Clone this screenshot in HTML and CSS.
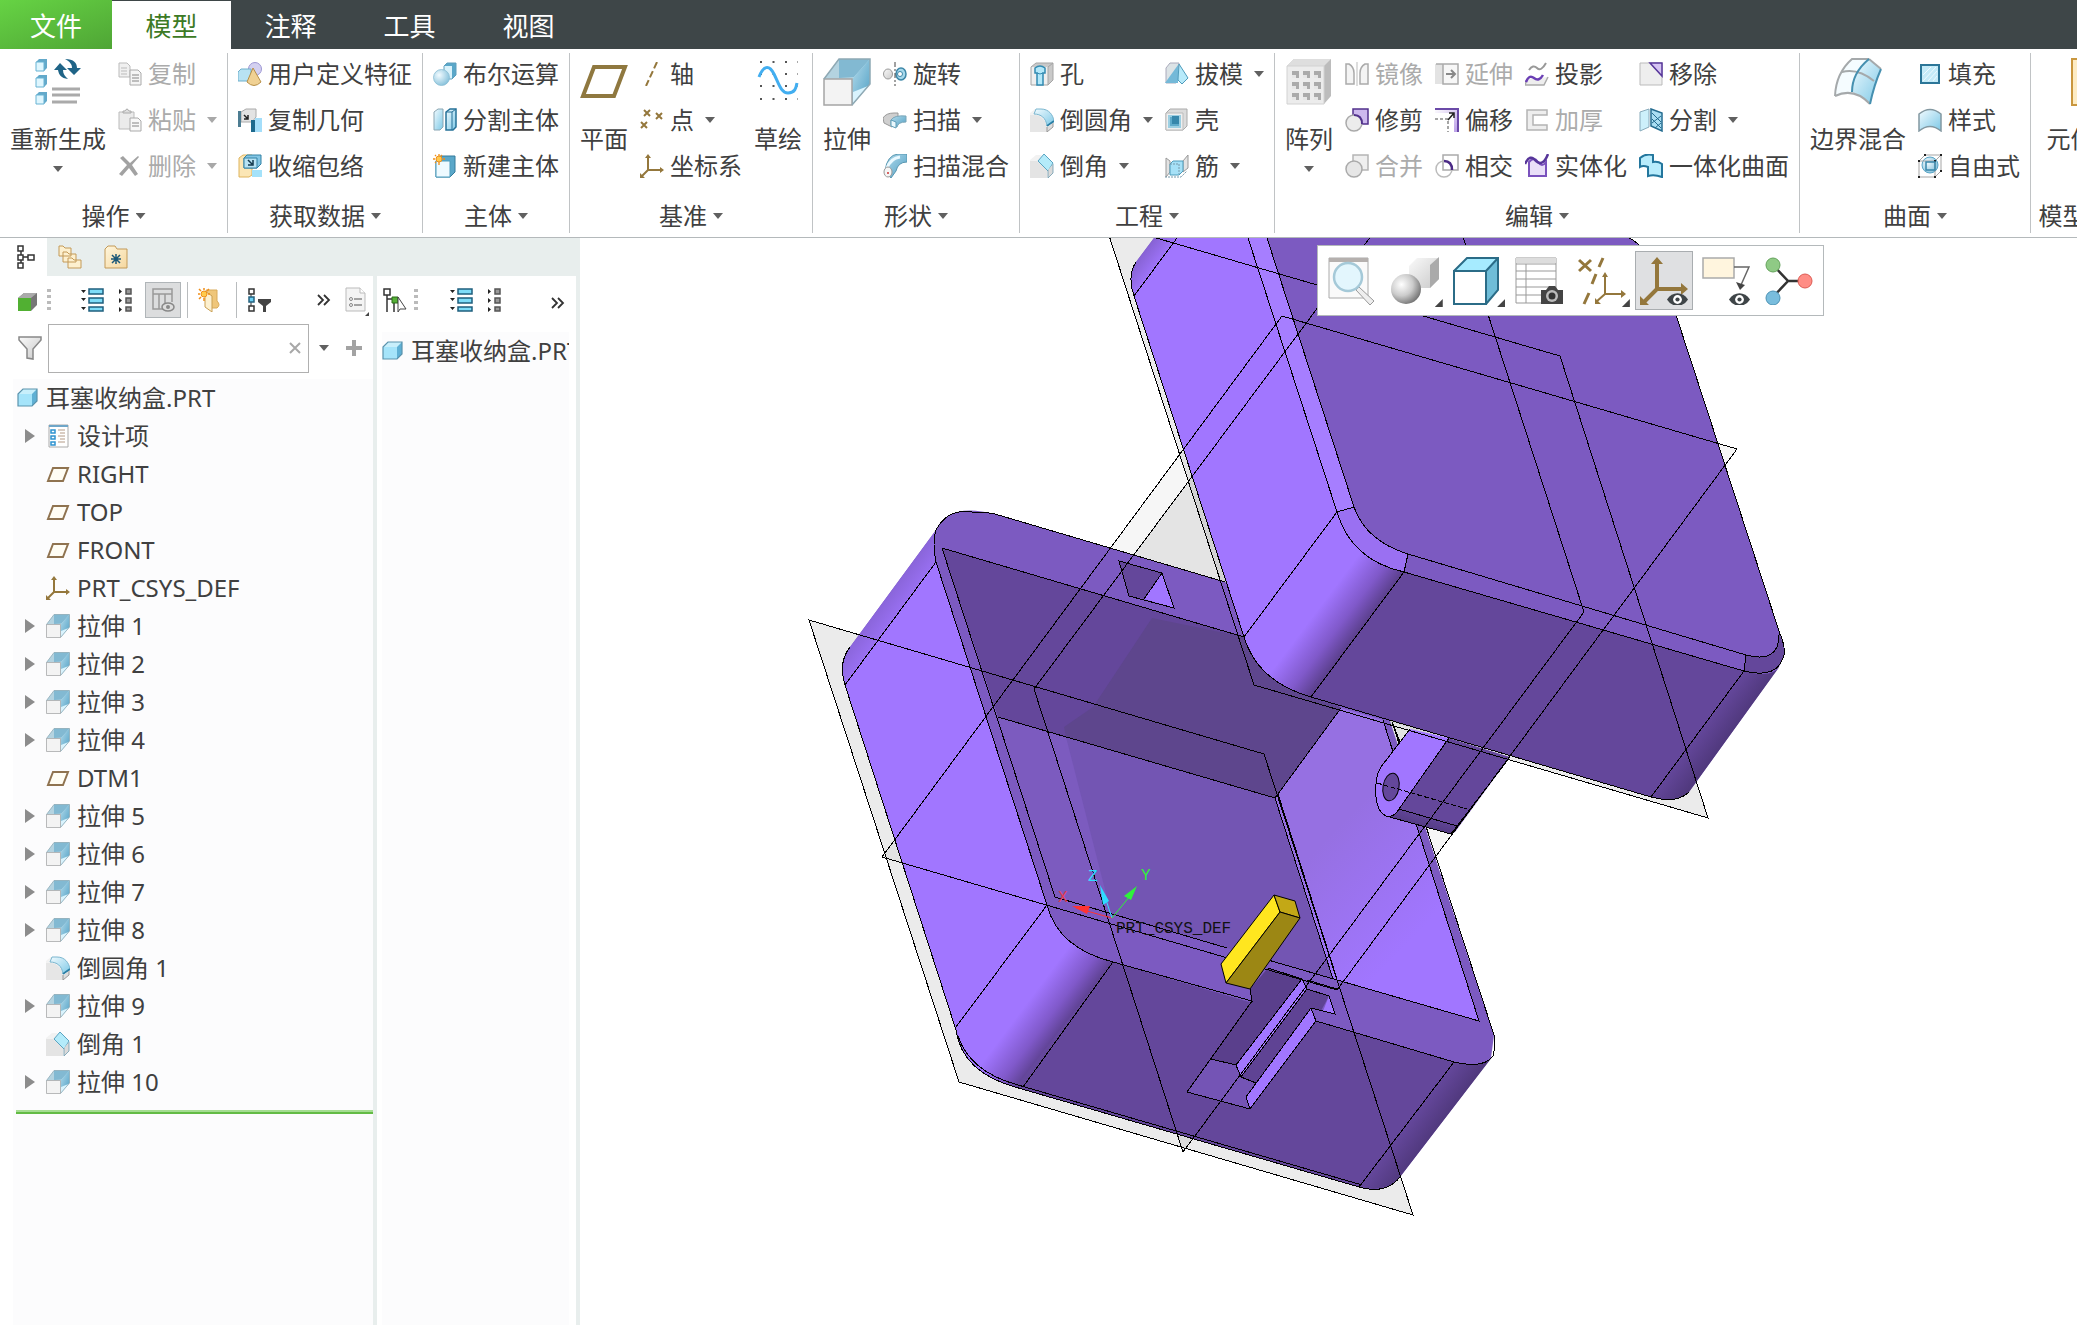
FILE: index.html
```html
<!DOCTYPE html>
<html lang="zh-CN">
<head>
<meta charset="utf-8">
<title>耳塞收纳盒.PRT</title>
<link rel="stylesheet" href="styles.css">
</head>
<body>
<svg class="sprite" width="0" height="0" aria-hidden="true">
  <defs>
    <linearGradient id="blue" x1="0" y1="0" x2="1" y2="1"><stop offset="0" stop-color="#f2fbff"/><stop offset="1" stop-color="#7cc8e6"/></linearGradient>
    <linearGradient id="blueDeep" x1="0" y1="0" x2="1" y2="1"><stop offset="0" stop-color="#b5dcec"/><stop offset="1" stop-color="#4f9fc4"/></linearGradient>
    <linearGradient id="gray" x1="0" y1="0" x2="1" y2="1"><stop offset="0" stop-color="#fafafa"/><stop offset="1" stop-color="#c9c9c9"/></linearGradient>
    <linearGradient id="lilac" x1="0" y1="0" x2="1" y2="1"><stop offset="0" stop-color="#fff"/><stop offset="1" stop-color="#b79be6"/></linearGradient>
    <linearGradient id="tan" x1="0" y1="0" x2="1" y2="1"><stop offset="0" stop-color="#fff6dc"/><stop offset="1" stop-color="#f5d79f"/></linearGradient>
    <radialGradient id="ball" cx=".35" cy=".35" r=".75"><stop offset="0" stop-color="#fff"/><stop offset=".5" stop-color="#ccc"/><stop offset="1" stop-color="#666"/></radialGradient>
    <radialGradient id="blueBall" cx=".35" cy=".35" r=".75"><stop offset="0" stop-color="#f2fbff"/><stop offset="1" stop-color="#7fbdd8"/></radialGradient>
  </defs>
  <symbol id="i-extrude" viewBox="0 0 48 48">
    <path d="M1 21 16 1h31v25L29 47H1z" fill="#d4e9f2"/>
    <path d="M16 1h31L29 21H1z" fill="#b4d3e0"/>
    <path d="M16 1h31L31 19 16 20z" fill="#82b9d2"/>
    <path d="M47 1v25L29 47V21z" fill="url(#blueDeep)"/>
    <path d="M45 28 30 46V34z" fill="#d9f3fd"/>
    <path d="M1 21h28v26H1z" fill="#f3f3f3" stroke="#a5a5a5" stroke-width="1.500"/>
    <path d="M1 21 16 1h31v25L29 47" fill="none" stroke="#8fa9b4" stroke-width="1.500"/>
  </symbol>
  <symbol id="i-round" viewBox="0 0 24 24">
    <path d="M0 5 5 1h6v23H0z" fill="#f2f2f2"/>
    <path d="M0 7h4c8 0 12 6 13 12v5H0z" fill="#e6e6e6"/>
    <path d="M6 1h5c8 0 12 6 13 12l-7 5C16 10 11 6 4 6z" fill="url(#blue)" stroke="#7bb6cf"/>
    <path d="M17 18l7-5" stroke="#2c7fa5" stroke-width="2"/><path d="M23 15v4l-6 5v-5" fill="#ddd" stroke="#999"/>
  </symbol>
  <symbol id="i-chamfer" viewBox="0 0 24 24">
    <path d="M0 6 6 1h5l12 12v6l-7 5H0z" fill="#f2f2f2"/><path d="M0 7h7l10 9v8H0z" fill="#e4e4e4"/>
    <path d="M14 0 23 9l-5 8L8 7z" fill="#b4ebfa" stroke="#5aa4c2"/><path d="M18 16v8l5-5V10" fill="#dadada" stroke="#6e9cb0" stroke-width=".8"/>
  </symbol>
  <symbol id="i-plane" viewBox="0 0 24 24"><path d="M7 6h15l-5 13H2z" fill="#fffdf4" stroke="#8f7350" stroke-width="2"/></symbol>
  <symbol id="i-csys" viewBox="0 0 24 24"><path d="M8 2v14h14M8 16l-7 7" fill="none" stroke="#94773c" stroke-width="2"/><path d="M5 4l3-4 3 4zM20 13l4 3-4 3zM0 19v5h5z" fill="#94773c"/></symbol>
  <symbol id="i-part" viewBox="0 0 24 24"><path d="M1 8 6 3h14v12l-5 5H1z" fill="#5fb0d4"/><path d="M1 8 6 3h14l-5 5z" fill="#c8effb"/><path d="M1 8h14v12H1z" fill="#a5e4fa"/><path d="M1 8 6 3h14v12l-5 5H1z" fill="none" stroke="#5a93ad" stroke-width="1.200"/></symbol>
  <symbol id="i-expand" viewBox="0 0 24 24"><path d="M1 2h5L3.500 5zM1 10h5l-2.500 3zM1 19h5l-2.500 3z" fill="#222"/><path d="M9 1h14v5H9zM9 10h14v5H9zM9 19h14v4H9z" fill="#7edcf8" stroke="#1f5f7d" stroke-width="1.500"/></symbol>
  <symbol id="i-collapse" viewBox="0 0 14 24"><path d="M0 1v5l3-2.500zM0 10v5l3-2.500zM0 19v5l3-2.500z" fill="#222"/><path d="M7 1h5v5H7zM7 10h5v5H7zM7 19h5v4H7z" fill="#999" stroke="#555" stroke-width="1.500"/></symbol>
  <symbol id="i-eye" viewBox="0 0 20 12"><path d="M0 6C5-2 15-2 20 6 15 14 5 14 0 6z" fill="#3f4548"/><circle cx="10" cy="6" r="4.200" fill="#fff"/><circle cx="10" cy="6" r="2" fill="#3f4548"/></symbol>
  <symbol id="i-design" viewBox="0 0 24 24"><path d="M3 1h19v22H3z" fill="#fff" stroke="#aaa"/><path d="M3 1h19v2H3z" fill="#6fa6c8"/><path d="M5 6h4v3H5zM5 12h4v3H5zM5 18h4v3H5z" fill="#fff" stroke="#2f93cf" stroke-width="1.500"/><path d="M12 6h7M14 9h5M12 12h7M14 15h5M12 18h7" stroke="#b39a86" stroke-width="1"/></symbol>
</svg>

<nav class="tabs" aria-label="功能区">
  <button class="tab tab-file">文件</button>
  <button class="tab tab-active">模型</button>
  <button class="tab">注释</button>
  <button class="tab">工具</button>
  <button class="tab">视图</button>
</nav>

<header class="ribbon">
  <section class="group">
    <div class="commands">
      <button class="big"><svg viewBox="0 0 48 48"><path d="M2 4l3-3h8v9l-3 3H2zM2 20l3-3h8v9l-3 3H2zM2 37l3-3h8v9l-3 3H2z" fill="#63a9ca"/><path d="M2 4h8v9H2zM2 20h8v9H2zM2 37h8v9H2z" fill="#dff6fe" stroke="#69b3d3"/><path d="M18 31h28M18 37h28M18 44h25" stroke="#aaa" stroke-width="3"/><path d="M31 1c9 0 12 4 12 9h4l-7 7-7-7h5c0-4-2-6-7-9z" fill="#1f6487"/><path d="M34 21c-7-1-9-4-10-9h-4l6-7 7 7h-4c0 4 2 6 5 9z" fill="#1f6487"/></svg><span>重新生成</span><i class="caret"></i></button>
      <div class="column">
        <button class="cmd" disabled><svg viewBox="0 0 24 24"><path d="M1 1h8l3 3v11H1z" fill="#f0f0f0" stroke="#bbb"/><path d="M3 6h6M3 9h6M3 12h6" stroke="#bbb"/><path d="M12 8h8l3 3v12H12z" fill="#f5f5f5" stroke="#aaa"/><path d="M14 13h7M14 16h7M14 19h7" stroke="#aaa" stroke-width="1.500"/></svg><span>复制</span></button>
        <button class="cmd" disabled><svg viewBox="0 0 24 24"><path d="M1 4h15v17H1z" fill="#ebebeb" stroke="#bbb"/><path d="M5 5V3h2q2-4 4 0h2v2z" fill="#ddd" stroke="#aaa"/><path d="M12 10h8l3 3v10H12z" fill="#f8f8f8" stroke="#aaa"/><path d="M14 15h7M14 18h7" stroke="#aaa" stroke-width="1.500"/></svg><span>粘贴</span><i class="caret"></i></button>
        <button class="cmd" disabled><svg viewBox="0 0 24 24"><path d="M2 4 5 2l7 7 8-7 1 1-7 8 6 9-3 2-6-8-7 8-3-2 8-9z" fill="#a2a2a2"/></svg><span>删除</span><i class="caret"></i></button>
      </div>
    </div>
    <button class="label">操作<i class="caret"></i></button>
  </section>

  <section class="group">
    <div class="commands">
      <div class="column">
        <button class="cmd"><svg viewBox="0 0 24 24"><circle cx="17" cy="7" r="6.500" fill="#d3d0f0" stroke="#9d97d3"/><path d="M0 10l3-3h10v9l-3 3H0z" fill="#b8e2f3" stroke="#6fb0cc"/><path d="M15 6l8 14q-7 7-14 0z" fill="#f0d193" stroke="#b78f47"/></svg><span>用户定义特征</span></button>
        <button class="cmd"><svg viewBox="0 0 24 24"><path d="M3 4l5-3h10v8l-4 5H3z" fill="#e3e3e3" stroke="#aaa"/><path d="M6 7l4 4m0-4v4H6" stroke="#222" stroke-width="1.500" fill="none"/><path d="M0 3h3v16H0z" fill="#4d7d92"/><path d="M13 12h4v12h-4z" fill="#1d6a8e"/><path d="M17 10h7v14h-7z" fill="#a4defa"/></svg><span>复制几何</span></button>
        <button class="cmd"><svg viewBox="0 0 24 24"><path d="M1 4l4-3h9v20l-3 2H1z" fill="#fbe6b5" stroke="#dfb45d"/><path d="M6 4l3-3h14v9l-4 4H6z" fill="#84c6e4" stroke="#3282a6"/><path d="M6 4h13v10H6z" fill="#b7e2f3" stroke="#3282a6"/><path d="M10 6l4 4m1-4v5h-5" stroke="#13384c" stroke-width="1.500" fill="none"/><path d="M14 16h10v7H14z" fill="#a4e2fa"/></svg><span>收缩包络</span></button>
      </div>
    </div>
    <button class="label">获取数据<i class="caret"></i></button>
  </section>

  <section class="group">
    <div class="commands">
      <div class="column">
        <button class="cmd"><svg viewBox="0 0 24 24"><path d="M11 4l3-3h9v12l-4 4h-8z" fill="#5aa7c9"/><path d="M11 4h8v13h-8z" fill="#d9f2fb"/><path d="M11 4l3-3h9v12l-4 4h-8z" fill="none" stroke="#5e9fbd"/><circle cx="8.500" cy="15.500" r="8" fill="url(#blueBall)" stroke="#89bdd3" stroke-width=".8"/></svg><span>布尔运算</span></button>
        <button class="cmd"><svg viewBox="0 0 24 24"><path d="M1 4l4-3h5v18l-3 3H1z" fill="url(#blue)" stroke="#8aa6b3"/><path d="M13 4l4-3h6v18l-3 3h-7z" fill="url(#blue)" stroke="#267198" stroke-width="1.500"/><path d="M13 4h6v18M19 4l4-3" fill="none" stroke="#267198"/></svg><span>分割主体</span></button>
        <button class="cmd"><svg viewBox="0 0 24 24"><path d="M3 7l4-5h15v16l-5 5H3z" fill="#5aa7c9" stroke="#347a9b"/><path d="M3 7h14v16H3z" fill="#eefaff" stroke="#4d9dbe"/><circle cx="6" cy="5" r="3" fill="#ffc94d" stroke="#ef8e1a"/><path d="M6 0v2M6 8v3M0 5h2M10 5h2M2 1l1 1M9 1l-1 1M2 9l1-1" stroke="#ef8e1a" stroke-width="1.300"/></svg><span>新建主体</span></button>
      </div>
    </div>
    <button class="label">主体<i class="caret"></i></button>
  </section>

  <section class="group">
    <div class="commands">
      <button class="big"><svg viewBox="0 0 48 48"><path d="M14 9h31L34 38H3z" fill="#fff" stroke="#8f783f" stroke-width="4"/></svg><span>平面</span></button>
      <div class="column">
        <button class="cmd"><svg viewBox="0 0 24 24"><path d="M17 0 6 24" stroke="#94773c" stroke-width="2" stroke-dasharray="7 3"/></svg><span>轴</span></button>
        <button class="cmd"><svg viewBox="0 0 24 24"><path d="M4 2l6 6m0-6L4 8M16 5l6 6m0-6l-6 6M1 14l6 6m0-6l-6 6" stroke="#94773c" stroke-width="2"/></svg><span>点</span><i class="caret"></i></button>
        <button class="cmd"><svg><use href="#i-csys"/></svg><span>坐标系</span></button>
      </div>
      <button class="big"><svg viewBox="0 0 48 48"><path d="M6 4h38M6 16h38M6 28h38M6 41h38" stroke="#555" stroke-width="2" stroke-dasharray="2 10.500"/><path d="M5 19C9 8 15 6 20 16s7 19 14 19 8-5 9-10" fill="none" stroke="#42aef0" stroke-width="3"/></svg><span>草绘</span></button>
    </div>
    <button class="label">基准<i class="caret"></i></button>
  </section>

  <section class="group">
    <div class="commands">
      <button class="big"><svg><use href="#i-extrude"/></svg><span>拉伸</span></button>
      <div class="column">
        <button class="cmd"><svg viewBox="0 0 24 24"><ellipse cx="5" cy="12" rx="4.500" ry="5" fill="url(#gray)" stroke="#999"/><ellipse cx="18" cy="12" rx="5" ry="6" fill="#a5d8ec" stroke="#3d87a8" stroke-width="1.500"/><circle cx="17" cy="12" r="2.500" fill="#fff" stroke="#3d87a8"/><path d="M12 0v24" stroke="#444" stroke-dasharray="5 2 2 2"/></svg><span>旋转</span></button>
        <button class="cmd"><svg viewBox="0 0 24 24"><path d="M0 10q3-5 11-5h4v6q-6 0-6 4v4L1 15z" fill="#cfcfcf" stroke="#999"/><path d="M8 12q3-5 15-4v6q-8 0-9 5l-6-2z" fill="url(#blueDeep)" stroke="#7aa6b8"/><path d="M8 12l5 2v6l-5-2z" fill="#eaf8fd" stroke="#5e9db8"/></svg><span>扫描</span><i class="caret"></i></button>
        <button class="cmd"><svg viewBox="0 0 24 24"><path d="M2 17Q4 1 15 0h9v8q-9 0-11 9l-5 7z" fill="url(#blueDeep)" stroke="#5997b1"/><path d="M4 14Q8 4 17 3" stroke="#eaf9ff" stroke-width="3" fill="none"/><ellipse cx="5" cy="18" rx="4" ry="5" fill="#f5f5f5" stroke="#999"/><circle cx="5" cy="19" r="1" fill="#c33"/></svg><span>扫描混合</span></button>
      </div>
    </div>
    <button class="label">形状<i class="caret"></i></button>
  </section>

  <section class="group">
    <div class="commands">
      <div class="column">
        <button class="cmd"><svg viewBox="0 0 24 24"><path d="M1 5l5-4h17v17l-5 5H1z" fill="#c9c9c9"/><path d="M1 5h17v18H1z" fill="#efefef"/><path d="M1 5l5-4h17v17l-5 5H1zM18 23V5l5-4" fill="none" stroke="#a5a5a5"/><path d="M5 6q5-4 10 0v5h-2v12H7V11H5z" fill="#b4e8f9" stroke="#328bb2" stroke-width="1.500"/><path d="M7 11q3 2 6 0" stroke="#328bb2" fill="none"/></svg><span>孔</span></button>
        <button class="cmd"><svg><use href="#i-round"/></svg><span>倒圆角</span><i class="caret"></i></button>
        <button class="cmd"><svg><use href="#i-chamfer"/></svg><span>倒角</span><i class="caret"></i></button>
      </div>
      <div class="column">
        <button class="cmd"><svg viewBox="0 0 24 24"><path d="M1 6l4-5h9l-3 20H1z" fill="#dce3e6" stroke="#aab"/><path d="M0 21 13 3v18z" fill="#74b9d8"/><path d="M14 2 23 16l-6 6-4-4z" fill="#b7eafa" stroke="#4e9bbb"/></svg><span>拔模</span><i class="caret"></i></button>
        <button class="cmd"><svg viewBox="0 0 24 24"><path d="M1 5l4-4h17v17l-4 4H1z" fill="#dcdcdc" stroke="#aaa"/><path d="M1 5h17v17H1z" fill="#efefef" stroke="#bbb"/><path d="M4 8h11v11H4z" fill="#5fabcb" stroke="#9ccfe2" stroke-width="2"/><path d="M7 8h7v8H7z" fill="#3787ab"/></svg><span>壳</span></button>
        <button class="cmd"><svg viewBox="0 0 24 24"><path d="M1 4l4 3v11l-4 5zM23 1l-5 6v11l5-4z" fill="#e3e3e3" stroke="#999"/><path d="M5 10l3-3h10v10l-4 4H5z" fill="#a6e1f7" stroke="#4d9cbb"/><path d="M5 10h9v10M0 23h16l6-6" fill="none" stroke="#79a" stroke-dasharray="2 1"/></svg><span>筋</span><i class="caret"></i></button>
      </div>
    </div>
    <button class="label">工程<i class="caret"></i></button>
  </section>

  <section class="group">
    <div class="commands">
      <button class="big"><svg viewBox="0 0 48 48"><path d="M2 8 9 1h37v37l-7 8H2z" fill="#bcbcbc"/><path d="M2 8 9 1h37l-7 7z" fill="#dedede"/><path d="M2 8h37v38H2z" fill="#ececec" stroke="#d2d2d2"/><path d="M7 13h7v7H7zM18 13h7v7h-7zM29 13h7v7h-7zM7 24h7v7H7zM18 24h7v7h-7zM29 24h7v7h-7zM7 35h7v7H7zM18 35h7v7h-7zM29 35h7v7h-7z" fill="#aaa"/><path d="M7 20v-3h4v3zM18 20v-3h4v3zM29 20v-3h4v3zM7 31v-3h4v3zM18 31v-3h4v3zM29 31v-3h4v3zM7 42v-3h4v3zM18 42v-3h4v3zM29 42v-3h4v3z" fill="#e6e6e6"/></svg><span>阵列</span><i class="caret"></i></button>
      <div class="column">
        <button class="cmd" disabled><svg viewBox="0 0 24 24"><path d="M1 2h3q5 3 5 9v11H1zM23 2h-3q-5 3-5 9v11h8z" fill="#f4f4f4" stroke="#aaa" stroke-width="1.500"/><path d="M12 0v24" stroke="#bbb"/></svg><span>镜像</span></button>
        <button class="cmd"><svg viewBox="0 0 24 24"><path d="M8 1h15v15H8z" fill="#cdb9ee" stroke="#51318c" stroke-width="1.500"/><circle cx="9" cy="15" r="8" fill="#ececec" stroke="#aaa" stroke-width="1.500"/><path d="M9 7q8 0 8 9" fill="none" stroke="#51318c" stroke-width="2"/></svg><span>修剪</span></button>
        <button class="cmd" disabled><svg viewBox="0 0 24 24"><path d="M8 1h15v15H8z" fill="#efefef" stroke="#b5b5b5" stroke-width="1.500"/><circle cx="9" cy="15" r="8" fill="#e6e6e6" stroke="#aaa" stroke-width="1.500"/></svg><span>合并</span></button>
      </div>
      <div class="column">
        <button class="cmd" disabled><svg viewBox="0 0 24 24"><path d="M0 2h10v20H0z" fill="#e3e3e3"/><path d="M1 2h22v20H8V2" fill="#f7f7f7" stroke="#aaa" stroke-width="1.500"/><path d="M11 12h9m-4-4 4 4-4 4" stroke="#888" stroke-width="2" fill="none"/></svg><span>延伸</span></button>
        <button class="cmd"><svg viewBox="0 0 24 24"><path d="M0 0h24v24h-5V5H0z" fill="url(#lilac)"/><path d="M0 1h23v23" fill="none" stroke="#6b4aa8" stroke-width="2"/><path d="M0 11h13v13" fill="none" stroke="#888" stroke-width="1.500" stroke-dasharray="3 2"/><path d="M13 12l6-7m-5 0h5v5" fill="none" stroke="#222" stroke-width="1.500"/></svg><span>偏移</span></button>
        <button class="cmd"><svg viewBox="0 0 24 24"><path d="M8 1h15v15H8z" fill="#fff" stroke="#aaa" stroke-width="1.500"/><circle cx="9" cy="15" r="8" fill="none" stroke="#bbb" stroke-width="1.500"/><path d="M9 7q8 0 8 9" fill="none" stroke="#4b2a86" stroke-width="2.500"/></svg><span>相交</span></button>
      </div>
      <div class="column">
        <button class="cmd"><svg viewBox="0 0 24 24"><path d="M4 8q4-6 8-2t9-5" fill="none" stroke="#999" stroke-width="2"/><path d="M2 17 0 23h19l4-8" fill="#eee" stroke="#aaa" stroke-width="1.500"/><path d="M1 20q3-8 8-4t9-3" fill="none" stroke="#6b3fb5" stroke-width="2.500"/></svg><span>投影</span></button>
        <button class="cmd" disabled><svg viewBox="0 0 24 24"><path d="M2 2h20v5H8v10h14v5H2z" fill="#eee" stroke="#b4b4b4" stroke-width="1.500"/></svg><span>加厚</span></button>
        <button class="cmd"><svg viewBox="0 0 24 24"><path d="M4 8q5-6 9 0t8 0v14H4z" fill="#e9dff8" stroke="#7a52bd" stroke-width="2"/><path d="M0 10Q5-1 11 7q7 6 12-7" fill="none" stroke="#57369a" stroke-width="2.500"/></svg><span>实体化</span></button>
      </div>
      <div class="column">
        <button class="cmd"><svg viewBox="0 0 24 24"><path d="M1 1h22v22H1z" fill="#eee" stroke="#bbb"/><path d="M11 1h12v13z" fill="#d6c4f3" stroke="#57369a" stroke-width="1.500"/></svg><span>移除</span></button>
        <button class="cmd"><svg viewBox="0 0 24 24"><path d="M1 4l9-3v18l-9 4z" fill="#cdf0fb" stroke="#8ab"/><path d="M12 1l11 4v18l-11-5z" fill="#a9def3" stroke="#246c90" stroke-width="1.500"/><path d="M13 5l9 9M13 11l9 9M22 8l-9 7M22 15l-6 5" stroke="#246c90"/></svg><span>分割</span><i class="caret"></i></button>
        <button class="cmd"><svg viewBox="0 0 24 24"><path d="M1 4q6-5 13-3v7q5-1 9 2v13q-8-3-14-1v-9q-5-2-8 0z" fill="#b8ecfc" stroke="#23769d" stroke-width="2"/></svg><span>一体化曲面</span></button>
      </div>
    </div>
    <button class="label">编辑<i class="caret"></i></button>
  </section>

  <section class="group">
    <div class="commands">
      <button class="big"><svg viewBox="0 0 48 48"><path d="M1 38Q2 15 18 1h17L47 11Q40 27 36 46 20 29 1 38z" fill="#f5fcff"/><path d="M35 1l12 10Q40 27 36 46q-9-9-18-12 0-20 17-33z" fill="url(#blue)"/><path d="M1 38Q2 15 18 1h17M1 38q19-9 35 8M8 14q16-4 32 9" fill="none" stroke="#a5a9ab" stroke-width="2"/><path d="M35 1l12 10" stroke="#a5a9ab" stroke-width="2"/><path d="M35 1Q18 15 18 34M47 11Q40 27 36 46" fill="none" stroke="#4690b0" stroke-width="2"/></svg><span>边界混合</span></button>
      <div class="column">
        <button class="cmd"><svg viewBox="0 0 24 24"><path d="M3 3h18v18H3z" fill="#c5ebf8" stroke="#2c7698" stroke-width="2"/><path d="M5 13l8-8M5 19 18 5M10 19l9-10M15 19l4-5" stroke="#eefaff"/></svg><span>填充</span></button>
        <button class="cmd"><svg viewBox="0 0 24 24"><path d="M1 6q11-9 22 0v17q-11-9-22 0z" fill="url(#blue)" stroke="#8398a1" stroke-width="1.500"/></svg><span>样式</span></button>
        <button class="cmd"><svg viewBox="0 0 24 24"><circle cx="12" cy="11" r="8" fill="url(#blueBall)" stroke="#5aa5c6"/><path d="M1 7h16v16H1zM7 1h16v16l-6 6M1 7l6-6M17 7l6-6" fill="none" stroke="#a5a5a5"/><path d="M0 6h2v2H0zM16 6h2v2h-2zM0 22h2v2H0zM16 22h2v2h-2zM6 0h2v2H6zM22 0h2v2h-2zM22 16h2v2h-2z" fill="#222"/><path d="M8 8h9v8H8z" fill="none" stroke="#3787ab" stroke-width="1.500"/></svg><span>自由式</span></button>
      </div>
    </div>
    <button class="label">曲面<i class="caret"></i></button>
  </section>

  <section class="group group-intent">
    <div class="commands">
      <button class="big"><svg viewBox="0 0 48 48"><path d="M1 1h46v46H1z" fill="#fdecc4" stroke="#c9973f" stroke-width="2"/></svg><span>元件界面</span></button>
    </div>
    <button class="label">模型意图<i class="caret"></i></button>
  </section>
</header>

<main class="workspace">
  <aside class="navigator">
    <div class="nav-tabs">
      <button class="nav-tab nav-tab-active" aria-label="模型树"><svg viewBox="0 0 24 24"><path d="M7 6v12M8 12h8" stroke="#333" stroke-width="1.500" fill="none"/><path d="M4 1h5v5H4zM4 10h5v5H4zM14 10h6v5h-6zM4 18h5v5H4z" fill="#fff" stroke="#333" stroke-width="1.500"/></svg></button>
      <button class="nav-tab" aria-label="文件夹浏览器"><svg viewBox="0 0 24 24"><path d="M1 1h4l2 2h6v8H1zM5 7h4l2 2h7v8H5zM10 13h4l2 2h7v8H10z" fill="#fdf0cf" stroke="#c39a58"/></svg></button>
      <button class="nav-tab" aria-label="收藏夹"><svg viewBox="0 0 24 24"><path d="M1 4l3-3h7l2 3h10v19H1z" fill="url(#tan)" stroke="#c39a58"/><path d="M12 9v10M7 14h10M8 10l8 8M16 10l-8 8" stroke="#1b5878" stroke-width="1.500"/></svg></button>
    </div>
    <div class="panes">
      <section class="pane pane-tree">
        <div class="toolbar">
          <button class="tool" aria-label="模型"><svg viewBox="0 0 24 24"><path d="M2 10 8 5h13v12l-6 6H2z" fill="#777"/><path d="M2 10 8 5h13l-6 5z" fill="#aaa"/><path d="M2 10h13v13H2z" fill="#51b032"/></svg></button>
          <i class="grip"></i>
          <button class="tool tool-first" aria-label="全部展开"><svg><use href="#i-expand"/></svg></button>
          <button class="tool tool-narrow" aria-label="全部折叠"><svg class="thin"><use href="#i-collapse"/></svg></button>
          <button class="tool tool-on" aria-label="树列"><svg viewBox="0 0 24 24"><path d="M2 1h19v5H2zM2 6v15h6V6M8 6v15h4M14 6v9M21 6v8" fill="none" stroke="#999" stroke-width="1.500"/><ellipse cx="17" cy="19" rx="6" ry="4" fill="#ddd" stroke="#888" stroke-width="1.500"/><circle cx="17" cy="19" r="2" fill="#888"/></svg></button>
          <i class="rule"></i>
          <button class="tool" aria-label="新建"><svg viewBox="0 0 24 24"><path d="M8 2h11v11q4 4 0 7h-6z" fill="#efc67a" stroke="#d9ab5a"/><path d="M7 3l7 5v16l-7-5z" fill="#fdf0cf" stroke="#c99f52"/><circle cx="6" cy="6" r="3" fill="#ffcb4c" stroke="#ef8e1a"/><path d="M6 0v2M6 10v3M0 6h2M10 6h2M1 1l2 2M11 1 9 3M1 11l2-2" stroke="#ef8e1a" stroke-width="1.500"/></svg></button>
          <i class="rule"></i>
          <button class="tool" aria-label="树过滤器"><svg viewBox="0 0 24 24"><path d="M4 4v16" stroke="#333"/><path d="M2 1h5v5H2zM2 18h5v5H2z" fill="#fff" stroke="#333" stroke-width="1.500"/><path d="M2 9h5v5H2z" fill="#6bd0f5" stroke="#26627f" stroke-width="1.500"/><path d="M11 11h13v3l-5 4v6h-3v-6l-5-4z" fill="#444"/></svg></button>
          <button class="tool tool-last" aria-label="更多"><svg viewBox="0 0 24 24"><path d="M7 7l5 5-5 5M13 7l5 5-5 5" fill="none" stroke="#333" stroke-width="1.800"/></svg></button>
          <button class="tool tool-narrow" aria-label="设置"><svg class="tall" viewBox="0 0 24 32"><path d="M1 4h14l5 5v18H1z" fill="#f4f4f4" stroke="#bbb"/><path d="M15 4v5h5" fill="#fff" stroke="#bbb"/><circle cx="6" cy="15" r="1.500" fill="none" stroke="#888"/><circle cx="6" cy="21" r="1.500" fill="none" stroke="#888"/><path d="M9 15h8M9 21h8" stroke="#888" stroke-width="1.500"/><path d="M24 28v4h-4z" fill="#444"/></svg></button>
        </div>
        <div class="search">
          <label for="tree-filter" aria-label="过滤"><svg viewBox="0 0 24 24"><path d="M1 1h22v3l-8 9v10l-6-1v-9L1 4z" fill="url(#gray)" stroke="#888" stroke-width="1.500"/></svg></label>
          <div class="field"><input id="tree-filter" type="text"><button aria-label="清除"><svg viewBox="0 0 12 12"><path d="M1 1l10 10M11 1 1 11" stroke="#a8a8a8" stroke-width="2"/></svg></button></div>
          <button class="search-menu" aria-label="过滤选项"><i class="caret"></i></button>
          <button class="search-add" aria-label="添加"><svg viewBox="0 0 18 18"><path d="M7 1h4v6h6v4h-6v6H7v-6H1V7h6z" fill="#a3a3a3"/></svg></button>
        </div>
        <ul class="tree">
          <li class="root"><svg><use href="#i-part"/></svg>耳塞收纳盒.PRT</li>
          <li><i class="twist"></i><svg><use href="#i-design"/></svg>设计项</li>
          <li><i></i><svg><use href="#i-plane"/></svg>RIGHT</li>
          <li><i></i><svg><use href="#i-plane"/></svg>TOP</li>
          <li><i></i><svg><use href="#i-plane"/></svg>FRONT</li>
          <li><i></i><svg><use href="#i-csys"/></svg>PRT_CSYS_DEF</li>
          <li><i class="twist"></i><svg><use href="#i-extrude"/></svg>拉伸 1</li>
          <li><i class="twist"></i><svg><use href="#i-extrude"/></svg>拉伸 2</li>
          <li><i class="twist"></i><svg><use href="#i-extrude"/></svg>拉伸 3</li>
          <li><i class="twist"></i><svg><use href="#i-extrude"/></svg>拉伸 4</li>
          <li><i></i><svg><use href="#i-plane"/></svg>DTM1</li>
          <li><i class="twist"></i><svg><use href="#i-extrude"/></svg>拉伸 5</li>
          <li><i class="twist"></i><svg><use href="#i-extrude"/></svg>拉伸 6</li>
          <li><i class="twist"></i><svg><use href="#i-extrude"/></svg>拉伸 7</li>
          <li><i class="twist"></i><svg><use href="#i-extrude"/></svg>拉伸 8</li>
          <li><i></i><svg><use href="#i-round"/></svg>倒圆角 1</li>
          <li><i class="twist"></i><svg><use href="#i-extrude"/></svg>拉伸 9</li>
          <li><i></i><svg><use href="#i-chamfer"/></svg>倒角 1</li>
          <li><i class="twist"></i><svg><use href="#i-extrude"/></svg>拉伸 10</li>
          <li class="insert-here"></li>
        </ul>
      </section>
      <section class="pane pane-body">
        <div class="toolbar">
          <button class="tool" aria-label="选择"><svg viewBox="0 0 24 24"><path d="M4 7v17M4 11h7M11 14v10" stroke="#333" stroke-width="1.500" fill="none"/><path d="M1 1h6v6H1z" fill="#fff" stroke="#333" stroke-width="1.500"/><path d="M9 9h6v6H9z" fill="#55b037" stroke="#2b6b18"/><path d="M15 9l8 12h-6l-2 3z" fill="#fff" stroke="#444"/></svg></button>
          <i class="grip"></i>
          <button class="tool tool-first" aria-label="全部展开"><svg><use href="#i-expand"/></svg></button>
          <button class="tool tool-narrow" aria-label="全部折叠"><svg class="thin"><use href="#i-collapse"/></svg></button>
          <button class="tool tool-last" aria-label="更多"><svg viewBox="0 0 24 24"><path d="M6 10l5 5-5 5M12 10l5 5-5 5" fill="none" stroke="#333" stroke-width="1.800"/></svg></button>
        </div>
        <ul class="tree">
          <li class="root"><svg><use href="#i-part"/></svg>耳塞收纳盒.PRT</li>
        </ul>
      </section>
    </div>
  </aside>

  <section class="viewport">
    <svg class="model" viewBox="580 238 1497 1087" preserveAspectRatio="xMinYMin slice" role="img" aria-label="耳塞收纳盒">
      <defs>
        <linearGradient id="cornerUpper" gradientUnits="userSpaceOnUse" x1="1337" y1="512" x2="1409" y2="566"><stop offset="0" stop-color="#a176ff"/><stop offset=".48" stop-color="#a176ff"/><stop offset=".78" stop-color="#8059ca"/><stop offset="1" stop-color="#5a3f8b"/></linearGradient>
        <linearGradient id="cornerLower" gradientUnits="userSpaceOnUse" x1="1047" y1="905" x2="1118" y2="958"><stop offset="0" stop-color="#a176ff"/><stop offset=".48" stop-color="#a176ff"/><stop offset=".78" stop-color="#8059ca"/><stop offset="1" stop-color="#5a3f8b"/></linearGradient>
        <linearGradient id="edgeUpper" gradientUnits="userSpaceOnUse" x1="1744" y1="671" x2="1768" y2="689"><stop offset="0" stop-color="#64479b"/><stop offset="1" stop-color="#4e377a"/></linearGradient>
        <linearGradient id="edgeLower" gradientUnits="userSpaceOnUse" x1="1454" y1="1062" x2="1478" y2="1080"><stop offset="0" stop-color="#64479b"/><stop offset="1" stop-color="#4e377a"/></linearGradient>
        <linearGradient id="sideUpper" gradientUnits="userSpaceOnUse" x1="1134" y1="250" x2="1158" y2="268"><stop offset="0" stop-color="#7c5ac1"/><stop offset="1" stop-color="#a176ff"/></linearGradient>
        <linearGradient id="sideLower" gradientUnits="userSpaceOnUse" x1="882" y1="603" x2="906" y2="621"><stop offset="0" stop-color="#8a65da"/><stop offset="1" stop-color="#a176ff"/></linearGradient>
        <linearGradient id="innerWall" gradientUnits="userSpaceOnUse" x1="1335" y1="830" x2="1430" y2="920"><stop offset="0" stop-color="#9670e2"/><stop offset="1" stop-color="#a176ff"/></linearGradient>
        <linearGradient id="hingeFoot" gradientUnits="userSpaceOnUse" x1="1420" y1="812" x2="1416" y2="828"><stop offset="0" stop-color="#64479b"/><stop offset="1" stop-color="#50397f"/></linearGradient>
      </defs>
      <g>
        <path d="M809 620 1264 754 1413 1215 959 1082z" fill="#000" fill-opacity=".08"/>
        <path d="M882 857 1282 316 1737 449 1337 990z" fill="#000" fill-opacity=".035"/>
        <path d="M1034 689 1435 150 1584 612 1183 1152z" fill="#000" fill-opacity=".07"/>
        <path d="M1105 223 1560 356 1708 818 1254 685z" fill="#000" fill-opacity=".08"/>
      </g>
      <!-- box body -->
      <path d="M936 530 850 647Q838 662 845 685L956 1030Q962 1072 1015 1087L1359 1187Q1386 1195 1400 1177L1491 1058 1494 1035 1383 700 1225 582 995 514Q948 502 936 530z" fill="#7c5ac1"/>
      <path d="M936 530 850 647Q838 662 845 685L936 562Q932 543 936 530z" fill="url(#sideLower)"/>
      <path d="M936 562 845 685 956 1030 1047 905z" fill="#a176ff"/>
      <path d="M1047 905Q1058 948 1113 962L1020 1088Q964 1076 956 1027z" fill="url(#cornerLower)"/>
      <path d="M1113 962 1454 1062 1359 1187 1015 1087z" fill="#64479b"/>
      <path d="M1454 1062Q1484 1069 1493 1056L1400 1177Q1386 1194 1359 1187z" fill="url(#edgeLower)"/>
      <path d="M942 548 1244 637 1341 708 1275 798 998 717z" fill="#64479b"/>
      <path d="M1152 618 1244 637 1290 690 1341 708 1275 798 1066 737 1064 727 1093 707z" fill="#5e468d"/>
      <path d="M998 717 1275 798 1333 979 1055 897z" fill="#7355b3"/>
      <path d="M998 717 1066 737 1111 913 1055 897z" fill="#7c5bbf"/>
      <path d="M1341 708 1383 720 1479 1021 1333 979 1275 798z" fill="url(#innerWall)"/>
      <path d="M1119 561 1162 573 1144 599 1129 596z" fill="#64479b"/>
      <path d="M1162 573 1174 608 1144 599z" fill="#a176ff"/>
      <!-- latch slot -->
      <path d="M1268 968 1302 979 1236 1065 1211 1059 1252 1001 1250 989z" fill="#5a3f8c"/>
      <path d="M1307 989 1329 996 1316 1020 1256 1083 1241 1077z" fill="#5f4394"/>
      <path d="M1211 1059 1236 1065 1241 1077 1256 1083 1246 1097 1250 1109 1187 1092z" fill="#7454b5"/>
      <path d="M1302 979 1307 989 1241 1077 1236 1065zM1311 1008 1316 1021 1250 1109 1246 1097zM1329 996 1335 1014 1323 1011z" fill="#a176ff"/>
      <path d="M1311 1008 1335 1014 1346 1029 1316 1021z" fill="#7c5ac1"/>
      <g class="edge">
        <path d="M936 530Q932 543 936 562L1047 905Q1058 948 1113 962L1252 1001 1250 989M936 530Q948 508 972 512 986 512 995 514L1225 582"/>
        <path d="M936 562 845 685M850 647Q838 662 845 685L956 1030Q962 1072 1015 1087L1359 1187Q1386 1195 1400 1177"/>
        <path d="M1047 905 956 1027M1113 962 1023 1087M1454 1062 1359 1187M958 1036Q970 1072 1018 1085L1362 1185"/>
        <path d="M1316 1021 1454 1062Q1484 1069 1493 1056 1496 1046 1494 1035L1392 722"/>
        <path d="M942 548 1244 637M942 548 1055 897 1227 948M1268 960 1479 1021 1383 720M998 717 1275 798 1333 979M1278 794 1337 979M1275 798 1341 708"/>
        <path d="M1119 561 1162 573 1174 608 1129 596zM1162 573 1144 599"/>
        <path d="M1252 1001 1187 1092 1250 1109 1316 1021 1311 1008 1246 1097 1250 1109M1211 1059 1236 1065 1241 1077 1256 1083M1302 979 1236 1065M1307 989 1241 1077M1302 979 1307 989 1329 996 1335 1014 1311 1008M1268 968 1302 979M1307 980 1337 989"/>
      </g>
      <!-- hinge -->
      <path d="M1392 722 1411 728 1400 742z" fill="#e2e2e2"/>
      <path d="M1449 738 1510 757 1455 832 1451 834 1386 816 1399 809z" fill="#64479b"/>
      <path d="M1399 809 1457 826 1451 834 1386 816z" fill="url(#hingeFoot)"/>
      <path d="M1410 729 1449 738 1399 809Q1394 818 1386 816 1374 810 1376 784 1377 770 1384 763z" fill="#a176ff"/>
      <ellipse cx="1391" cy="787" rx="8" ry="14" transform="rotate(10 1391 787)" fill="#64479b" stroke="#000"/>
      <g class="edge"><path d="M1410 729 1384 763Q1377 770 1376 784 1374 810 1386 816 1394 818 1399 809L1449 738M1399 809 1457 826M1386 816 1451 834 1510 757M1383 720 1393 752M1392 722 1400 742"/><path d="M1377 783 1467 809" stroke-dasharray="5 2"/></g>
      <!-- lid -->
      <path d="M1154 238 1136 262Q1127 276 1134 296L1244 637Q1258 682 1311 697L1651 797Q1677 804 1689 792L1776 671Q1788 658 1779 631L1676 315Q1653 248 1629 238z" fill="#7c5ac1"/>
      <path d="M1177 238 1248 238 1337 512 1244 637 1134 296z" fill="#a176ff"/>
      <path d="M1154 238H1177L1134 296Q1127 276 1136 262z" fill="url(#sideUpper)"/>
      <path d="M1248 238H1267L1354 507 1337 512z" fill="#a67eff"/>
      <path d="M1354 507Q1366 541 1408 554L1404 572Q1351 560 1337 512z" fill="#9a70f2"/>
      <path d="M1337 512Q1351 560 1404 572L1311 697Q1258 682 1244 637z" fill="url(#cornerUpper)"/>
      <path d="M1404 572 1744 671 1651 797 1311 697z" fill="#64479b"/>
      <path d="M1744 671Q1772 679 1780 666L1689 792Q1677 804 1651 797z" fill="url(#edgeUpper)"/>
      <path d="M1746 655Q1780 664 1779 633 1787 650 1783 658 1776 679 1744 671z" fill="#64479b"/>
      <g class="edge">
        <path d="M1136 262Q1127 276 1134 296L1244 637Q1258 682 1311 697L1651 797Q1677 804 1689 792M1177 238 1134 296M1248 238 1337 512 1354 507 1267 238"/>
        <path d="M1337 512Q1351 560 1404 572L1744 671Q1776 679 1783 658 1787 650 1779 631L1676 315Q1653 248 1629 238M1354 507Q1366 541 1408 554L1746 655Q1780 664 1779 633M1408 554 1404 572M1746 655 1744 671 1651 797M1337 512 1244 637M1404 572 1311 697"/>
      </g>
      <!-- datum planes -->
      <g class="edge">
        <path d="M809 620 1264 754 1413 1215 959 1082z"/>
        <path d="M882 857 1282 316 1737 449 1337 990z"/>
        <path d="M1034 689 1435 150 1584 612 1183 1152z"/>
        <path d="M1105 223 1560 356 1708 818 1254 685z"/>
      </g>
      <!-- latch pin -->
      <g stroke="#000">
        <path d="M1274 895 1280 912 1226 983 1221 964z" fill="#ffe61f"/>
        <path d="M1274 895 1295 901 1300 918 1280 912z" fill="#c3a816"/>
        <path d="M1280 912 1300 918 1250 989 1226 983z" fill="#9c8714"/>
      </g>
      <!-- coordinate system -->
      <path d="M1112 918 1076 908" stroke="#f33"/><path d="M1072 906 1090 906 1087 914z" fill="#f33"/>
      <path d="M1112 918 1104 894" stroke="#2edcff"/><path d="M1100 885 1109 901 1103 905z" fill="#2edcff"/>
      <path d="M1112 918 1130 896" stroke="#2ef23a"/><path d="M1137 886 1131 900 1124 896z" fill="#2ef23a"/>
      <text class="csys" x="1058" y="902" fill="#e33b50">X</text>
      <text class="csys" x="1088" y="881" fill="#2edcff">Z</text>
      <text class="csys" x="1141" y="880" fill="#2ef23a">Y</text>
      <text class="csys" x="1116" y="933" fill="#111">PRT_CSYS_DEF</text>
    </svg>

    <div class="view-tools" role="toolbar" aria-label="图形工具">
      <button aria-label="重新调整"><svg viewBox="0 0 48 48"><path d="M1 1h39v40H1z" fill="#fafafa" stroke="#aaa"/><path d="M1 1h39v4H1z" fill="#b5b0ae"/><path d="M31 30l15 14-4 4-14-15z" fill="#eee" stroke="#999"/><circle cx="20" cy="20" r="14" fill="#e3f6fd" stroke="#a5c9d8" stroke-width="2.500"/></svg></button>
      <button aria-label="显示样式"><svg viewBox="0 0 48 48"><path d="M18 9l8-8h22v21l-9 9H18z" fill="url(#gray)"/><path d="M39 8l9-8v22l-9 9z" fill="#aaa"/><circle cx="15" cy="32" r="15" fill="url(#ball)"/></svg><i class="more"></i></button>
      <button aria-label="隐藏线"><svg viewBox="0 0 48 48"><path d="M1 14 14 1h31L33 14z" fill="#a6ebff"/><path d="M33 14 45 1v32L33 47z" fill="#6fbdd8"/><path d="M1 14h32v33H1z" fill="#fff"/><path d="M1 14h32v33H1zM1 14 14 1h31v32L33 47M33 14 45 1" fill="none" stroke="#2b6c87" stroke-width="2"/></svg><i class="more"></i></button>
      <button aria-label="已保存方向"><svg viewBox="0 0 48 48"><path d="M1 1h40v45H1z" fill="#fff" stroke="#999"/><path d="M1 1h40v5H1z" fill="#ddd"/><path d="M1 7h40M1 14h40M1 22h40M1 30h40M1 38h40M11 7v39" stroke="#999"/><path d="M26 33h5l3-4h6l3 4h5v14H26z" fill="#444"/><circle cx="37" cy="39" r="6" fill="#bbb"/><circle cx="37" cy="39" r="3.500" fill="#333"/></svg></button>
      <button aria-label="基准显示"><svg viewBox="0 0 48 48"><path d="M1 3l12 11M13 3 1 14M25 1l-4 9M18 17l-4 10M11 36 6 47" stroke="#94773c" stroke-width="3"/><path d="M27 19v18h19M27 37l-9 8" fill="none" stroke="#94773c" stroke-width="2"/><path d="M24 20l3-5 3 5zM43 33l5 4-5 4zM17 41v6h6z" fill="#94773c"/></svg><i class="more"></i></button>
      <button class="pressed" aria-label="坐标系显示"><svg viewBox="0 0 48 48"><path d="M17 4v28h27M17 32 3 46" fill="none" stroke="#94773c" stroke-width="4"/><path d="M11 7l6-7 6 7zM41 26l7 6-7 6zM0 39v9h9z" fill="#94773c"/><use href="#i-eye" x="27" y="36" width="21" height="13"/></svg></button>
      <button aria-label="注释显示"><svg viewBox="0 0 48 48"><path d="M1 1h31v20H1z" fill="#fff5de" stroke="#aaa" stroke-width="1.500"/><path d="M32 10h15l-8 18" fill="none" stroke="#666" stroke-width="1.500"/><path d="M34 25l9 3-5 5z" fill="#444"/><use href="#i-eye" x="27" y="36" width="21" height="13"/></svg></button>
      <button aria-label="旋转中心"><svg viewBox="0 0 48 48"><path d="M8 8l15 16L8 40M23 24h18" fill="none" stroke="#333" stroke-width="2.500"/><circle cx="8" cy="8" r="7" fill="#8fca85" stroke="#64a35b"/><circle cx="40" cy="24" r="7" fill="#ff8d85" stroke="#dd5b53"/><circle cx="8" cy="41" r="7" fill="#79bddd" stroke="#4c92b4"/></svg></button>
    </div>
  </section>
</main>
</body>
</html>
```
FILE: styles.css
```css
* {
  box-sizing: border-box;
}

body {
  margin: 0;
  min-height: 100vh;
  display: flex;
  flex-direction: column;
  overflow-x: hidden;
  background: #fff;
  color: #404040;
  font: 24px/30px "Noto Sans", "Noto Sans CJK SC", sans-serif;
}

button {
  margin: 0;
  padding: 0;
  border: 0;
  background: none;
  color: inherit;
  font: inherit;
  white-space: nowrap;
}

svg {
  display: block;
  flex: none;
}

.sprite {
  position: absolute;
}

.caret {
  flex: none;
  width: 10px;
  height: 6px;
  background: #606060;
  clip-path: polygon(0 0, 100% 0, 50% 100%);
}

/* Ribbon tabs */
.tabs {
  display: flex;
  height: 49px;
  background: #3e4648;
}

.tab {
  width: 119px;
  padding-top: 2px;
  color: #fff;
  font-size: 26px;
}

.tab-file {
  width: 112px;
  background: linear-gradient(160deg, #66d344, #4fa535);
}

.tab-active {
  margin-top: 1px;
  background: #fff;
  color: #3d7a25;
}

/* Ribbon */
.ribbon {
  display: flex;
  height: 189px;
  overflow: hidden;
  border-bottom: 1px solid #b4b9bb;
}

.group {
  flex: none;
  display: flex;
  flex-direction: column;
  padding: 2px 11px 0 10px;
  background: linear-gradient(#c0c3c5, #c0c3c5) right center / 1px calc(100% - 8px) no-repeat;
}

.group-intent {
  width: 128px;
}

.commands {
  display: flex;
  justify-content: center;
  gap: 12px;
  height: 141px;
}

.column {
  display: flex;
  flex-direction: column;
}

.cmd {
  display: flex;
  align-items: center;
  gap: 6px;
  height: 46px;
}

.cmd svg {
  width: 24px;
  height: 24px;
}

.cmd .caret {
  margin-left: 5px;
}

.cmd:disabled {
  color: #ababab;
}

.cmd:disabled .caret {
  background: #a8a8a8;
}

.big {
  display: flex;
  flex-direction: column;
  align-items: center;
  padding-top: 7px;
}

.big svg {
  width: 48px;
  height: 48px;
  margin-bottom: 18px;
}

.big .caret {
  margin-top: 12px;
}

.label {
  display: flex;
  align-items: center;
  justify-content: center;
  gap: 6px;
  height: 45px;
  padding-top: 3px;
}

/* Navigator */
.workspace {
  flex: 1;
  display: flex;
}

.navigator {
  flex: none;
  width: 580px;
  display: flex;
  flex-direction: column;
}

.nav-tabs {
  display: flex;
  height: 38px;
  background: #e8eeed;
}

.nav-tab {
  display: grid;
  place-items: center;
  width: 46px;
}

.nav-tab svg {
  width: 24px;
  height: 24px;
}

.nav-tab-active {
  width: 47px;
  padding-left: 4px;
  background: #fff;
}

.panes {
  flex: 1;
  display: flex;
}

.pane {
  display: flex;
  flex-direction: column;
  border-right: 4px solid #e8eeed;
  overflow: hidden;
}

.pane-tree {
  width: 377px;
}

.pane-body {
  flex: 1;
}

.toolbar {
  display: flex;
  align-items: center;
  height: 47px;
}

.pane-tree .toolbar {
  padding-left: 10px;
}

.tool {
  display: grid;
  place-items: center;
  width: 36px;
  height: 36px;
}

.tool svg {
  width: 24px;
  height: 24px;
}

.tool .thin {
  width: 14px;
}

.tool .tall {
  height: 32px;
}

.tool-narrow {
  width: 32px;
}

.tool-first {
  margin-left: 23px;
}

.pane-body .tool-first {
  margin-left: 25px;
}

.tool-last {
  margin-left: auto;
}

.tool-on {
  margin-left: 3px;
  border: 1px solid #b0b5b8;
  background: #dcddde;
}

.grip {
  width: 4px;
  height: 22px;
  margin-left: 1px;
  background: repeating-linear-gradient(#bbb 0 3px, transparent 3px 6px);
}

.rule {
  width: 1px;
  height: 36px;
  margin: 0 4px 0 8px;
  background: #b9bcbe;
}

.tool-on + .rule {
  margin-left: 6px;
}

.search {
  display: flex;
  align-items: center;
  height: 50px;
  padding-left: 18px;
}

.search svg {
  width: 24px;
  height: 24px;
}

.field {
  display: flex;
  width: 261px;
  height: 49px;
  margin-left: 6px;
  border: 1px solid #b0b0b0;
}

.field input {
  flex: 1;
  min-width: 0;
  border: 0;
  outline: 0;
  padding: 0 8px;
  font: inherit;
  color: inherit;
}

.field button {
  padding: 0 7px;
}

.field svg {
  width: 12px;
  height: 12px;
}

.search-menu,
.search-add {
  display: grid;
  place-items: center;
  width: 30px;
}

.search .search-add svg {
  width: 18px;
  height: 18px;
}

.tree {
  flex: 1;
  list-style: none;
  margin: 6px 0 0 13px;
  padding: 0;
  background: #fcfcfd;
}

.pane-body .tree {
  margin: 9px 7px 0 5px;
  overflow: hidden;
}

.tree li {
  display: flex;
  align-items: center;
  height: 38px;
  padding-left: 12px;
  white-space: nowrap;
}

.tree li i {
  width: 10px;
  height: 14px;
  margin-right: 11px;
}

.tree .twist {
  background: #8c8c8c;
  clip-path: polygon(0 0, 100% 50%, 0 100%);
}

.tree svg {
  width: 24px;
  height: 24px;
  margin-right: 7px;
}

.tree .root {
  padding-left: 4px;
}

.tree .root svg {
  margin-right: 5px;
}

.pane-body .tree .root {
  padding-left: 0;
}

.tree .insert-here {
  height: 4px;
  margin: 9px 0 0 3px;
  border-top: 2px solid #a5dd92;
  border-bottom: 2px solid #63bb45;
}

/* Graphics window */
.viewport {
  position: relative;
  flex: 1;
  min-width: 0;
  overflow: hidden;
}

.model {
  position: absolute;
  inset: 0;
  width: 100%;
  height: 100%;
}

.edge {
  fill: none;
  stroke: #000;
  stroke-width: 1;
  shape-rendering: crispEdges;
}

.csys {
  font: 16px "Liberation Mono", monospace;
}

.view-tools {
  position: absolute;
  top: 7px;
  right: 253px;
  width: 507px;
  height: 71px;
  display: grid;
  grid-template-columns: repeat(8, 1fr);
  padding: 5px 3px;
  border: 1px solid #b4b9bb;
  background: #fff;
}

.view-tools button {
  position: relative;
  display: grid;
  place-items: center;
  margin: 0 2px;
  border: 1px solid transparent;
}

.view-tools .pressed {
  border-color: #a9adb0;
  background: #dfe0e2;
}

.view-tools svg {
  width: 48px;
  height: 48px;
}

.more {
  position: absolute;
  right: 0;
  bottom: 2px;
  width: 8px;
  height: 8px;
  background: #444;
  clip-path: polygon(100% 0, 100% 100%, 0 100%);
}
```
